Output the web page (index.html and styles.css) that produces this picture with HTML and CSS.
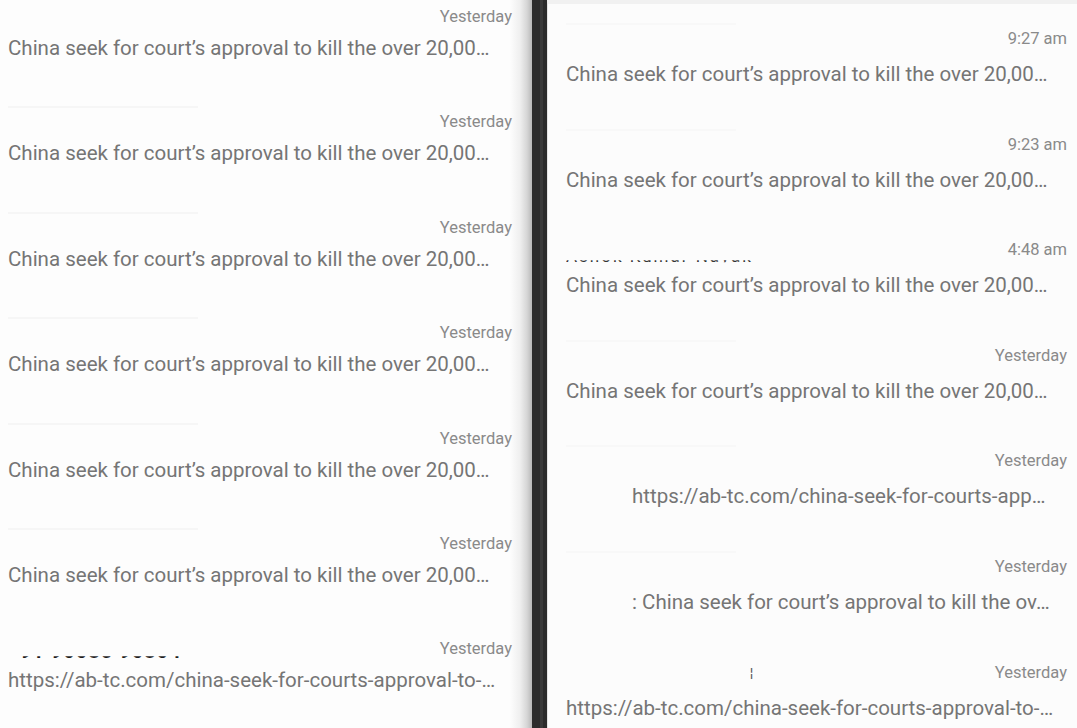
FILE: index.html
```html
<!DOCTYPE html>
<html lang="en">
<head>
<meta charset="utf-8">
<title>Messages</title>
<link rel="stylesheet" href="styles.css">
</head>
<body>
<div class="screen">
  <section class="panel panel-left">
    <div class="list list-left">
      <div class="row">
        <div class="head"><span class="spacer"></span><span class="time">Yesterday</span></div>
        <div class="msg">China seek for court’s approval to kill the over 20,00…</div>
      </div>
      <div class="row">
        <div class="head"><span class="ghost"></span><span class="time">Yesterday</span></div>
        <div class="msg">China seek for court’s approval to kill the over 20,00…</div>
      </div>
      <div class="row">
        <div class="head"><span class="ghost"></span><span class="time">Yesterday</span></div>
        <div class="msg">China seek for court’s approval to kill the over 20,00…</div>
      </div>
      <div class="row">
        <div class="head"><span class="ghost"></span><span class="time">Yesterday</span></div>
        <div class="msg">China seek for court’s approval to kill the over 20,00…</div>
      </div>
      <div class="row">
        <div class="head"><span class="ghost"></span><span class="time">Yesterday</span></div>
        <div class="msg">China seek for court’s approval to kill the over 20,00…</div>
      </div>
      <div class="row">
        <div class="head"><span class="ghost"></span><span class="time">Yesterday</span></div>
        <div class="msg">China seek for court’s approval to kill the over 20,00…</div>
      </div>
      <div class="row">
        <div class="head"><span class="name cut">+91 90085 90804</span><span class="time">Yesterday</span></div>
        <div class="msg">https://ab-tc.com/china-seek-for-courts-approval-to-…</div>
      </div>
    </div>
  </section>
  <div class="bezel"><div class="bezel-line"></div></div>
  <section class="panel panel-right">
    <div class="list list-right">
      <div class="row">
        <div class="head"><span class="ghost faint"></span><span class="time">9:27 am</span></div>
        <div class="msg">China seek for court’s approval to kill the over 20,00…</div>
      </div>
      <div class="row">
        <div class="head"><span class="ghost faint"></span><span class="time">9:23 am</span></div>
        <div class="msg">China seek for court’s approval to kill the over 20,00…</div>
      </div>
      <div class="row">
        <div class="head"><span class="name cut small">Ashok Kumar Nayak</span><span class="time">4:48 am</span></div>
        <div class="msg">China seek for court’s approval to kill the over 20,00…</div>
      </div>
      <div class="row">
        <div class="head"><span class="ghost faint"></span><span class="time">Yesterday</span></div>
        <div class="msg">China seek for court’s approval to kill the over 20,00…</div>
      </div>
      <div class="row">
        <div class="head"><span class="ghost faint"></span><span class="time">Yesterday</span></div>
        <div class="msg shift">https://ab-tc.com/china-seek-for-courts-app…</div>
      </div>
      <div class="row">
        <div class="head"><span class="ghost faint"></span><span class="time">Yesterday</span></div>
        <div class="msg shift">: China seek for court’s approval to kill the ov…</div>
      </div>
      <div class="row">
        <div class="head"><span class="mark">¦</span><span class="time">Yesterday</span></div>
        <div class="msg">https://ab-tc.com/china-seek-for-courts-approval-to-…</div>
      </div>
    </div>
  </section>
</div>
</body>
</html>
```

FILE: styles.css
```css
html, body {
  margin: 0;
  padding: 0;
  background: #fcfcfc;
}

body {
  font-family: Roboto, "Liberation Sans", Arial, sans-serif;
  width: 1077px;
  height: 728px;
  overflow: hidden;
}

.screen {
  display: flex;
  height: 728px;
}

.panel {
  height: 728px;
  overflow: hidden;
  box-sizing: border-box;
}

.panel-left {
  width: 532px;
  flex: none;
  padding: 7px 20px 0 8px;
  background: linear-gradient(to right, #fdfdfd 0, #fdfdfd 510px, #efefef 520px, #d6d6d6 527px, #b8b8b8 532px);
}

.bezel {
  width: 15px;
  flex: none;
  background: #2c2c2c;
  display: flex;
  justify-content: center;
}

.bezel-line {
  width: 3px;
  margin-left: 4px;
  background: #3a3a3a;
}

.panel-right {
  flex: 1;
  padding: 25px 10px 0 18px;
  border-top: 4px solid #f1f1f1;
  border-left: 1px solid #e4e4e4;
  background: #fcfcfc;
}

.list {
  display: flex;
  flex-direction: column;
}

.list-left .row {
  height: 105.4px;
}

.list-right .row {
  height: 105.6px;
}

.row {
  display: flex;
  flex-direction: column;
  flex: none;
}

.head {
  display: flex;
  justify-content: space-between;
  align-items: center;
  height: 20px;
}

.time {
  font-size: 16.5px;
  line-height: 20px;
  color: #8a8a8a;
  white-space: nowrap;
}

.msg {
  font-size: 20.5px;
  line-height: 24px;
  color: #757575;
  white-space: nowrap;
}

.list-left .msg {
  margin-top: 9px;
}

.list-right .msg {
  margin-top: 13px;
}

.msg.shift {
  padding-left: 66px;
}

.spacer {
  display: block;
}

.ghost {
  display: block;
  width: 190px;
  height: 2px;
  margin-top: -30px;
  background: #f6f6f6;
}

.ghost.faint {
  background: #f8f8f8;
  width: 170px;
}

.name {
  font-size: 20px;
  line-height: 20px;
  font-weight: 700;
  color: #1c1c1c;
  white-space: nowrap;
  letter-spacing: 1px;
}

.name.cut {
  clip-path: inset(15px 0 2px 0);
  margin-top: 4px;
}

.name.small {
  align-self: flex-start;
  font-size: 17px;
  font-weight: 400;
  letter-spacing: 2px;
  color: #333;
  clip-path: inset(14px 0 4px 0);
  margin-top: 6px;
}

.mark {
  font-size: 13px;
  line-height: 20px;
  color: #555;
  margin-left: 184px;
}
```
